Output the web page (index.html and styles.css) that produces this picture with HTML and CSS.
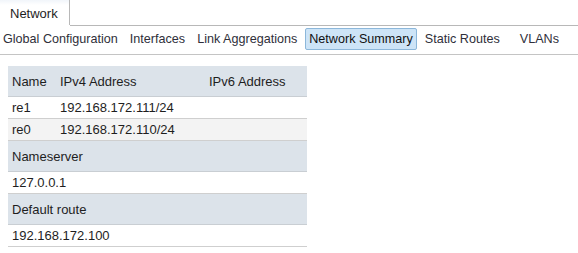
FILE: index.html
```html
<!DOCTYPE html>
<html lang="en">

<head>
    <meta charset="UTF-8">
    <title>Network Summary</title>
    <link rel="stylesheet" href="styles.css">
</head>

<body>
    <div class="tab-bar">
        <div class="tab">Network</div>
        <div class="tab-filler"></div>
    </div>

    <div class="sub-nav">
        <span class="nav-item">Global Configuration</span>
        <span class="nav-item">Interfaces</span>
        <span class="nav-item">Link Aggregations</span>
        <span class="nav-item active">Network Summary</span>
        <span class="nav-item">Static Routes</span>
        <span class="nav-item vlans">VLANs</span>
    </div>

    <table class="summary">
        <tr class="head">
            <th class="col-name">Name</th>
            <th class="col-v4">IPv4 Address</th>
            <th class="col-v6">IPv6 Address</th>
        </tr>
        <tr>
            <td>re1</td>
            <td>192.168.172.111/24</td>
            <td></td>
        </tr>
        <tr class="alt">
            <td>re0</td>
            <td>192.168.172.110/24</td>
            <td></td>
        </tr>
        <tr class="head">
            <th colspan="3">Nameserver</th>
        </tr>
        <tr>
            <td colspan="3">127.0.0.1</td>
        </tr>
        <tr class="head">
            <th colspan="3">Default route</th>
        </tr>
        <tr>
            <td colspan="3">192.168.172.100</td>
        </tr>
    </table>
</body>

</html>
```

FILE: styles.css
```css
body {
    margin: 0;
    padding: 0;
    background: #ffffff;
    font-family: 'Liberation Sans', Arial, sans-serif;
    font-size: 13px;
    color: #1e1e1e;
}

/* top tab strip */
.tab-bar {
    display: flex;
    height: 26px;
}

.tab {
    width: 59px;
    height: 25px;
    padding-left: 10px;
    line-height: 27px;
    border-right: 1px solid #b8b8b8;
    background: linear-gradient(to bottom, #f1f5fa 0px, #ffffff 5px);
}

.tab-filler {
    flex: 1;
    border-bottom: 1px solid #b8b8b8;
}

/* sub navigation */
.sub-nav {
    display: flex;
    gap: 4px;
    padding: 2px 0 4px 0;
    border-bottom: 1px solid #c4c4c4;
    color: #2f2f3a;
    font-size: 12.6px;
}

.nav-item {
    flex: none;
    white-space: nowrap;
    height: 20px;
    line-height: 21px;
    padding: 0 3px;
    border: 1px solid transparent;
    border-radius: 2px;
}

.nav-item:first-child {
    margin-left: -1px;
}

.nav-item.active {
    background: #cde4f7;
    border-color: #8cb7da;
    color: #101010;
}

.nav-item.vlans {
    margin-left: 8px;
}

/* summary table */
.summary {
    margin: 11px 0 0 8px;
    width: 299px;
    border-collapse: collapse;
}

.summary th,
.summary td {
    text-align: left;
    font-weight: normal;
    padding: 0 4px;
    white-space: nowrap;
}

.summary th {
    height: 30px;
    background: #dce3ea;
    border-bottom: 1px solid #c9ced3;
}

.summary td {
    height: 21px;
    background: #ffffff;
    border-bottom: 1px solid #cfcfcf;
}

.summary tr.alt td {
    background: #f3f3f3;
}

.col-name {
    width: 40px;
}

.col-v4 {
    width: 141px;
}
```
